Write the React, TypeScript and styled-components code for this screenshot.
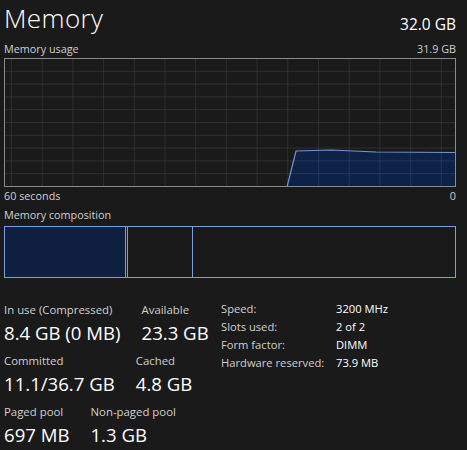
import { Fragment } from 'react';
import styled, { createGlobalStyle } from 'styled-components';

const GlobalStyle = createGlobalStyle`
  html, body {
    margin: 0;
    padding: 0;
    background: #1a1a1a;
  }
  body {
    font-family: 'Open Sans', 'Noto Sans', sans-serif;
    color: #ffffff;
  }
`;

const Page = styled.main`
  display: flex;
  flex-flow: column nowrap;
  width: 467px;
  height: 450px;
  box-sizing: border-box;
  padding: 0 11px 0 4px;
  overflow: hidden;
`;

const Header = styled.header`
  display: flex;
  justify-content: space-between;
  align-items: flex-start;
  height: 36px;
`;

const Title = styled.h1`
  margin: 0;
  font-size: 26px;
  line-height: 36px;
  font-weight: 300;
  letter-spacing: 0.4px;
`;

const Total = styled.span`
  margin-top: 14px;
  font-size: 15.5px;
  line-height: 20px;
`;

const CaptionRow = styled.div<{ $top: number }>`
  display: flex;
  justify-content: space-between;
  margin-top: ${(p) => p.$top}px;
`;

const Caption = styled.span`
  font-size: 10.8px;
  line-height: 14px;
  color: #cfcfcf;
`;

const Chart = styled.svg`
  display: block;
  margin-top: 2px;
  width: 452px;
  height: 129px;
`;

const CompositionBar = styled.div`
  display: flex;
  margin-top: 4px;
  height: 52px;
  box-sizing: border-box;
  border: 1px solid #7a9fd9;
`;

const Segment = styled.div<{ $width?: number; $fill?: boolean }>`
  box-sizing: border-box;
  flex: ${(p) => (p.$width ? `0 0 ${p.$width}px` : '1 1 auto')};
  background: ${(p) => (p.$fill ? '#0e1f3f' : 'transparent')};
  border-right: ${(p) => (p.$width ? '1px solid #7a9fd9' : 'none')};
`;

const Details = styled.section`
  display: grid;
  grid-template-columns: 217px auto;
  align-items: start;
  margin-top: 24px;
`;

const StatColumn = styled.div`
  display: flex;
  flex-flow: column nowrap;
  gap: 7px;
`;

const StatRow = styled.div`
  display: flex;
  gap: 21px;
`;

const Stat = styled.div`
  display: flex;
  flex-flow: column nowrap;
  gap: 2px;
`;

const StatLabel = styled.span`
  font-size: 11.4px;
  line-height: 16px;
  color: #cfcfcf;
  white-space: nowrap;
`;

const StatValue = styled.span`
  font-size: 18.6px;
  line-height: 26px;
  white-space: nowrap;
`;

const SpecTable = styled.dl`
  display: grid;
  grid-template-columns: 115px auto;
  grid-auto-rows: 18px;
  margin: -2px 0 0;
  font-size: 11.2px;
  line-height: 18px;
`;

const SpecTerm = styled.dt`
  color: #cfcfcf;
  white-space: nowrap;
`;

const SpecValue = styled.dd`
  margin: 0;
  white-space: nowrap;
`;

const W = 452;
const H = 129;

function UsageChart() {
  const vLines = Array.from({ length: 15 }, (_, i) => 7.5 + i * 30.7);
  const hLines = Array.from({ length: 9 }, (_, i) => 0.5 + (i + 1) * 12.8);
  const top = [
    [283, H],
    [292, 93],
    [327, 92],
    [372, 94],
    [W - 0.5, 94.5],
  ];
  const line = top.map(([x, y]) => `${x},${y}`).join(' ');
  const area = `${line} ${W - 0.5},${H} 283,${H}`;

  return (
    <Chart viewBox={`0 0 ${W} ${H}`}>
      <polygon points={area} fill='#0e2247' />
      {vLines.map((x) => (
        <line key={`v${x}`} x1={x} x2={x} y1={0} y2={H} stroke='#ffffff' strokeOpacity={0.09} />
      ))}
      {hLines.map((y) => (
        <line key={`h${y}`} x1={0} x2={W} y1={y} y2={y} stroke='#ffffff' strokeOpacity={0.09} />
      ))}
      <polyline points={line} fill='none' stroke='#7096d4' strokeWidth={1.2} />
      <rect x={0.5} y={0.5} width={W - 1} height={H - 1} fill='none' stroke='#8a8a8a' />
    </Chart>
  );
}

const stats = [
  [
    { label: 'In use (Compressed)', value: '8.4 GB (0 MB)' },
    { label: 'Available', value: '23.3 GB' },
  ],
  [
    { label: 'Committed', value: '11.1/36.7 GB' },
    { label: 'Cached', value: '4.8 GB' },
  ],
  [
    { label: 'Paged pool', value: '697 MB' },
    { label: 'Non-paged pool', value: '1.3 GB' },
  ],
];

const specs = [
  ['Speed:', '3200 MHz'],
  ['Slots used:', '2 of 2'],
  ['Form factor:', 'DIMM'],
  ['Hardware reserved:', '73.9 MB'],
];

function App() {
  return (
    <Page>
      <GlobalStyle />
      <Header>
        <Title>Memory</Title>
        <Total>32.0 GB</Total>
      </Header>
      <CaptionRow $top={6}>
        <Caption>Memory usage</Caption>
        <Caption>31.9 GB</Caption>
      </CaptionRow>
      <UsageChart />
      <CaptionRow $top={2}>
        <Caption>60 seconds</Caption>
        <Caption>0</Caption>
      </CaptionRow>
      <CaptionRow $top={5}>
        <Caption>Memory composition</Caption>
      </CaptionRow>
      <CompositionBar>
        <Segment $width={121} $fill />
        <Segment $width={2} />
        <Segment $width={65} />
        <Segment />
      </CompositionBar>
      <Details>
        <StatColumn>
          {stats.map((row, i) => (
            <StatRow key={i}>
              {row.map((s) => (
                <Stat key={s.label}>
                  <StatLabel>{s.label}</StatLabel>
                  <StatValue>{s.value}</StatValue>
                </Stat>
              ))}
            </StatRow>
          ))}
        </StatColumn>
        <SpecTable>
          {specs.map(([k, v]) => (
            <Fragment key={k}>
              <SpecTerm>{k}</SpecTerm>
              <SpecValue>{v}</SpecValue>
            </Fragment>
          ))}
        </SpecTable>
      </Details>
    </Page>
  );
}

export default App;
